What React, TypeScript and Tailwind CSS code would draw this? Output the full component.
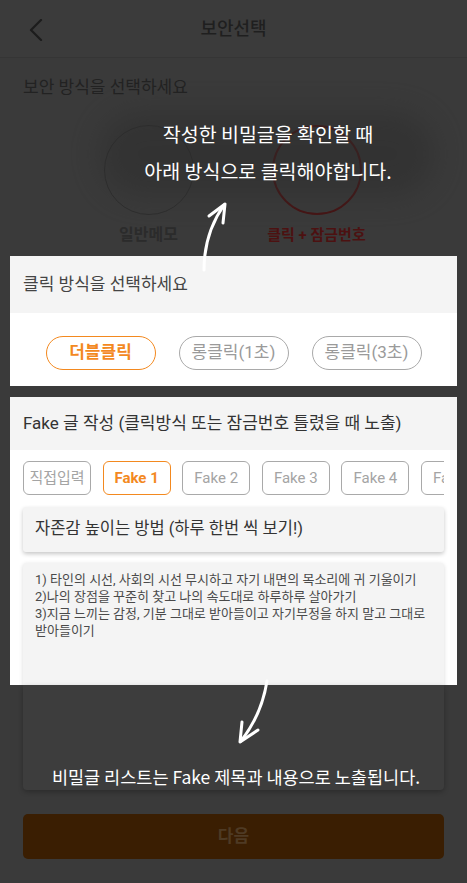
import React from "react";

const tabs = ["직접입력", "Fake 1", "Fake 2", "Fake 3", "Fake 4", "Fake 5"];

const bodyLines = [
  "1) 타인의 시선, 사회의 시선 무시하고 자기 내면의 목소리에 귀 기울이기",
  "2)나의 장점을 꾸준히 찾고 나의 속도대로 하루하루 살아가기",
  "3)지금 느끼는 감정, 기분 그대로 받아들이고 자기부정을 하지 말고 그대로 받아들이기",
];

function Arrows() {
  return (
    <svg className="pointer-events-none absolute left-0 top-0" width="467" height="883" viewBox="0 0 467 883" fill="none">
      <g stroke="#ffffff" strokeWidth="3" strokeLinecap="round" strokeLinejoin="round">
        <path d="M204 270 C204 248 210 225 224 205" />
        <path d="M209 216 L225 204 L223 223" />
        <path d="M267 681 C264 700 256 722 241 741" />
        <path d="M242 722 L240 742 L258 730" />
      </g>
    </svg>
  );
}

export default function App() {
  return (
    <div className="relative h-[883px] w-[467px] overflow-hidden bg-[#3a3a3a] font-['Roboto','Noto_Sans_CJK_KR',sans-serif]">
      {/* dimmed header */}
      <header className="relative flex h-[58px] items-center justify-center border-b border-[#353535] bg-[#3b3b3b]">
        <svg className="absolute left-[29px] top-[19px]" width="14" height="22" viewBox="0 0 14 22" fill="none">
          <path d="M12 1 L2 11 L12 21" stroke="#1c1c1c" strokeWidth="2.2" strokeLinecap="round" strokeLinejoin="round" />
        </svg>
        <h1 className="text-[18px] font-medium text-[#1f1f1f]">보안선택</h1>
      </header>

      {/* dimmed security type */}
      <p className="pl-[23px] pt-[17px] text-[17px] leading-6 text-[#222]">보안 방식을 선택하세요</p>
      <div className="mt-[26px] flex justify-center gap-[78px] pr-[2px]">
        <div className="flex w-[90px] flex-col items-center">
          <div className="h-[90px] w-[90px] rounded-full border border-[#2e2e2e]" />
          <span className="mt-[8px] whitespace-nowrap text-[16px] font-bold leading-6 text-[#2b2b2b]">일반메모</span>
        </div>
        <div className="flex w-[90px] flex-col items-center">
          <div className="h-[90px] w-[90px] rounded-full border-2 border-[#461414]" />
          <span className="mt-[8px] whitespace-nowrap text-[15px] font-bold leading-6 text-[#4c1111]">클릭 + 잠금번호</span>
        </div>
      </div>

      {/* highlighted: click type */}
      <section className="mx-[10px] mt-[9px]">
        <div className="flex h-[57px] items-center bg-[#f4f4f4] pl-[13px] text-[17px] text-[#444]">클릭 방식을 선택하세요</div>
        <div className="flex h-[73px] items-start justify-center gap-[23px] bg-white pt-[23px]">
          <button className="h-[34px] w-[110px] rounded-full border-[1.5px] border-[#f3891f] text-[17px] font-bold text-[#f3891f]">더블클릭</button>
          <button className="h-[34px] w-[110px] rounded-full border-[1.5px] border-[#a9a9a9] text-[17px] text-[#9a9a9a]">롱클릭(1초)</button>
          <button className="h-[34px] w-[110px] rounded-full border-[1.5px] border-[#a9a9a9] text-[17px] text-[#9a9a9a]">롱클릭(3초)</button>
        </div>
      </section>

      {/* highlighted: fake post */}
      <section className="mx-[10px] mt-[11px] h-[288px] overflow-hidden">
        <div className="flex h-[53px] items-center bg-[#f4f4f4] pl-[13px] text-[17px] text-[#333]">
          Fake 글 작성 (클릭방식 또는 잠금번호 틀렸을 때 노출)
        </div>
        <div className="bg-white px-[13px] pt-[11px]">
          <div className="flex gap-[11.6px] overflow-hidden">
            {tabs.map((t, i) => (
              <span
                key={t}
                className={
                  i === 1
                    ? "grid h-[34px] w-[68px] shrink-0 place-items-center rounded-[6px] border-[1.5px] border-[#f3891f] text-[15px] font-bold text-[#f3891f]"
                    : "grid h-[34px] w-[68px] shrink-0 place-items-center rounded-[6px] border-[1.5px] border-[#a9a9a9] text-[15px] text-[#a4a4a4]"
                }
              >
                {t}
              </span>
            ))}
          </div>
          <div className="mt-[12px] flex h-[45px] items-center rounded-[3px] bg-[#f4f4f4] px-[12px] text-[16.5px] text-[#333] shadow-[0_2px_4px_rgba(0,0,0,0.22)]">
            자존감 높이는 방법 (하루 한번 씩 보기!)
          </div>
          <div className="mt-[11px] h-[130px] rounded-t-[4px] bg-[#f4f4f4] px-[12px] pt-[8px] text-[13px] leading-[17px] text-[#4a4a4a] shadow-[0_1px_4px_rgba(0,0,0,0.15)]">
            {bodyLines.map((l) => (
              <p key={l}>{l}</p>
            ))}
          </div>
        </div>
      </section>

      {/* dimmed rest of content card */}
      <div className="mx-[23px] h-[105px] rounded-b-[4px] bg-[#3d3d3d] shadow-[0_2px_5px_rgba(0,0,0,0.25)]" />

      <button className="mx-[23px] mt-[24px] flex h-[45px] w-[421px] items-center justify-center rounded-[5px] bg-[#3a1e02] text-[17px] font-bold text-[#4e3a24]">
        다음
      </button>

      {/* tutorial overlay */}
      <div className="pointer-events-none absolute left-[100px] top-[112px] h-[84px] w-[335px] rounded-full bg-[#2c2c2c] opacity-50 blur-[14px]" />
      <div className="pointer-events-none absolute left-[68px] top-[115px] w-[400px] text-center font-['Noto_Sans_CJK_KR',sans-serif] text-[19.5px] leading-[37px] text-white">
        <p>작성한 비밀글을 확인할 때</p>
        <p>아래 방식으로 클릭해야합니다.</p>
      </div>
      <p className="pointer-events-none absolute left-0 top-[764px] w-[472px] text-center font-['Noto_Sans_CJK_KR',sans-serif] text-[17.5px] leading-[26px] text-white">
        비밀글 리스트는 Fake 제목과 내용으로 노출됩니다.
      </p>
      <Arrows />
    </div>
  );
}
